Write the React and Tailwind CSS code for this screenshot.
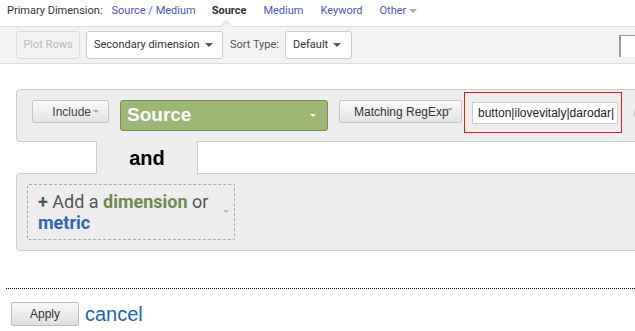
import React from 'react';

const Caret = ({ color = 'border-t-[#555]', size = 'md' }) => (
  <span
    className={`inline-block shrink-0 w-0 h-0 border-x-transparent ${color} ${
      size === 'sm' ? 'border-x-[3px] border-t-[3px]' : 'border-x-[4px] border-t-[4px]'
    }`}
  />
);

const roboto = { fontFamily: 'Roboto, "Liberation Sans", sans-serif' };
const arial = { fontFamily: '"Liberation Sans", Arial, sans-serif' };

export default function App() {
  return (
    <div className="relative w-[635px] h-[331px] overflow-hidden bg-white text-[#333] whitespace-nowrap" style={roboto}>
      {/* primary dimension tabs */}
      <div className="relative h-[26px] flex items-start pt-[4px] pl-[7px] text-[11px] leading-[14px]">
        <span className="text-[#333]">Primary Dimension:</span>
        <span className="ml-[9px] text-[#4a55cb]">Source / Medium</span>
        <span className="ml-[16px] font-bold text-[#333]">Source</span>
        <span className="ml-[17px] text-[#4a55cb]">Medium</span>
        <span className="ml-[17px] text-[#4a55cb]">Keyword</span>
        <span className="ml-[17px] flex items-center gap-[3px] text-[#4a55cb]">
          Other <Caret color="border-t-[#aaa]" />
        </span>
        {/* tab notch */}
        <span className="absolute left-[222px] top-[22px] w-[8px] h-[8px] rotate-45 bg-[#f3f3f3] border-l border-t border-[#ddd] z-10" />
      </div>

      {/* toolbar */}
      <div className="h-[38px] border-y border-[#ddd] bg-[#f3f3f3] flex items-start pt-[4px] pl-[16px] text-[11px]">
        <div className="shrink-0 w-[64px] h-[28px] flex items-center justify-center border border-[#ddd] rounded-[3px] text-[#bbb]">
          Plot Rows
        </div>
        <div className="shrink-0 ml-[6px] w-[137px] h-[28px] flex items-center justify-between pl-[7px] pr-[9px] bg-white border border-[#ccc] rounded-[3px] text-[#333]">
          Secondary dimension
          <Caret />
        </div>
        <span className="ml-[7px] h-[28px] flex items-center text-[#555]">Sort Type:</span>
        <div className="shrink-0 ml-[6px] w-[67px] h-[28px] flex items-center justify-between pl-[7px] pr-[10px] bg-white border border-[#ccc] rounded-[3px] text-[#333]">
          Default
          <Caret />
        </div>
        <div className="ml-auto mt-[4px] w-[16px] h-[22px] bg-white border-l-2 border-t border-[#999]" />
      </div>

      {/* filter builder */}
      <div className="mt-[25px] ml-[16px] w-[640px]" style={arial}>
        <div className="h-[53px] border border-[#ccc] rounded-[4px] bg-[#eee] flex items-start pt-[10px] pl-[15px]">
          <div className="shrink-0 w-[77px] h-[23px] flex items-center justify-end pr-[9px] gap-[2px] border border-[#c6c6c6] rounded-[2px] bg-gradient-to-b from-[#fafafa] to-[#e4e4e4] text-[12px] text-[#444]">
            Include
            <Caret color="border-t-[#aaa]" size="sm" />
          </div>
          <div className="shrink-0 ml-[11px] w-[208px] h-[31px] flex items-center justify-between pl-[6px] pr-[11px] border border-[#6e8c4a] rounded-[3px] bg-[#9db674] text-white font-bold text-[19px]">
            Source
            <Caret color="border-t-white" size="sm" />
          </div>
          <div className="shrink-0 ml-[11px] w-[123px] h-[23px] flex items-center pl-[14px] border border-[#c6c6c6] rounded-[2px] bg-gradient-to-b from-[#fafafa] to-[#e4e4e4] text-[12px] text-[#333]">
            Matching RegExp
            <span className="-ml-[2px] -mt-[4px] flex">
              <Caret color="border-t-[#aaa]" size="sm" />
            </span>
          </div>
          <div className="shrink-0 ml-[10px] mt-[2px] w-[146px] h-[22px] flex items-center pl-[5px] bg-white border border-[#ccc] text-[12px] text-[#222] overflow-hidden">
            button|ilovevitaly|darodar|
          </div>
          <div className="shrink-0 ml-[15px] mt-[7px] w-[12px] h-[12px] rounded-full bg-[#d4d4d4]" />
        </div>

        {/* and connector */}
        <div className="relative z-10 -my-[1px] ml-[80px] w-[102px] h-[33px] bg-[#eee] border-x border-[#ccc] flex items-center justify-center text-[20px] font-bold text-black">
          and
        </div>

        <div className="h-[78px] border border-[#ccc] rounded-[4px] bg-[#eee] pt-[10px] pl-[10px]" style={roboto}>
          <div className="relative w-[208px] h-[56px] border border-dashed border-[#aaa] rounded-[2px] pt-[6px] pl-[10px] text-[18px] leading-[21px]">
            <div className="text-[#555]">
              <span className="font-bold">+</span> Add a{' '}
              <span className="font-bold text-[#6f8a52]">dimension</span> or
            </div>
            <div className="font-bold text-[#2e64c0]">metric</div>
            <span className="absolute left-[195px] top-[25px] flex">
              <Caret color="border-t-[#bbb]" size="sm" />
            </span>
          </div>
        </div>
      </div>

      {/* red highlight */}
      <div className="absolute left-[464px] top-[92px] w-[158px] h-[41px] border border-[#e8191a]" />

      {/* footer */}
      <div className="mt-[37px] ml-[6px] border-t border-dotted border-black" />
      <div className="mt-[13px] ml-[11px] flex items-center" style={arial}>
        <div className="shrink-0 w-[68px] h-[24px] flex items-center justify-center border border-[#bbb] rounded-[2px] bg-gradient-to-b from-[#f8f8f8] to-[#dedede] text-[12px] text-[#333]">
          Apply
        </div>
        <span className="ml-[6px] text-[20px] leading-[22px] text-[#1c63b7]">cancel</span>
      </div>
    </div>
  );
}
